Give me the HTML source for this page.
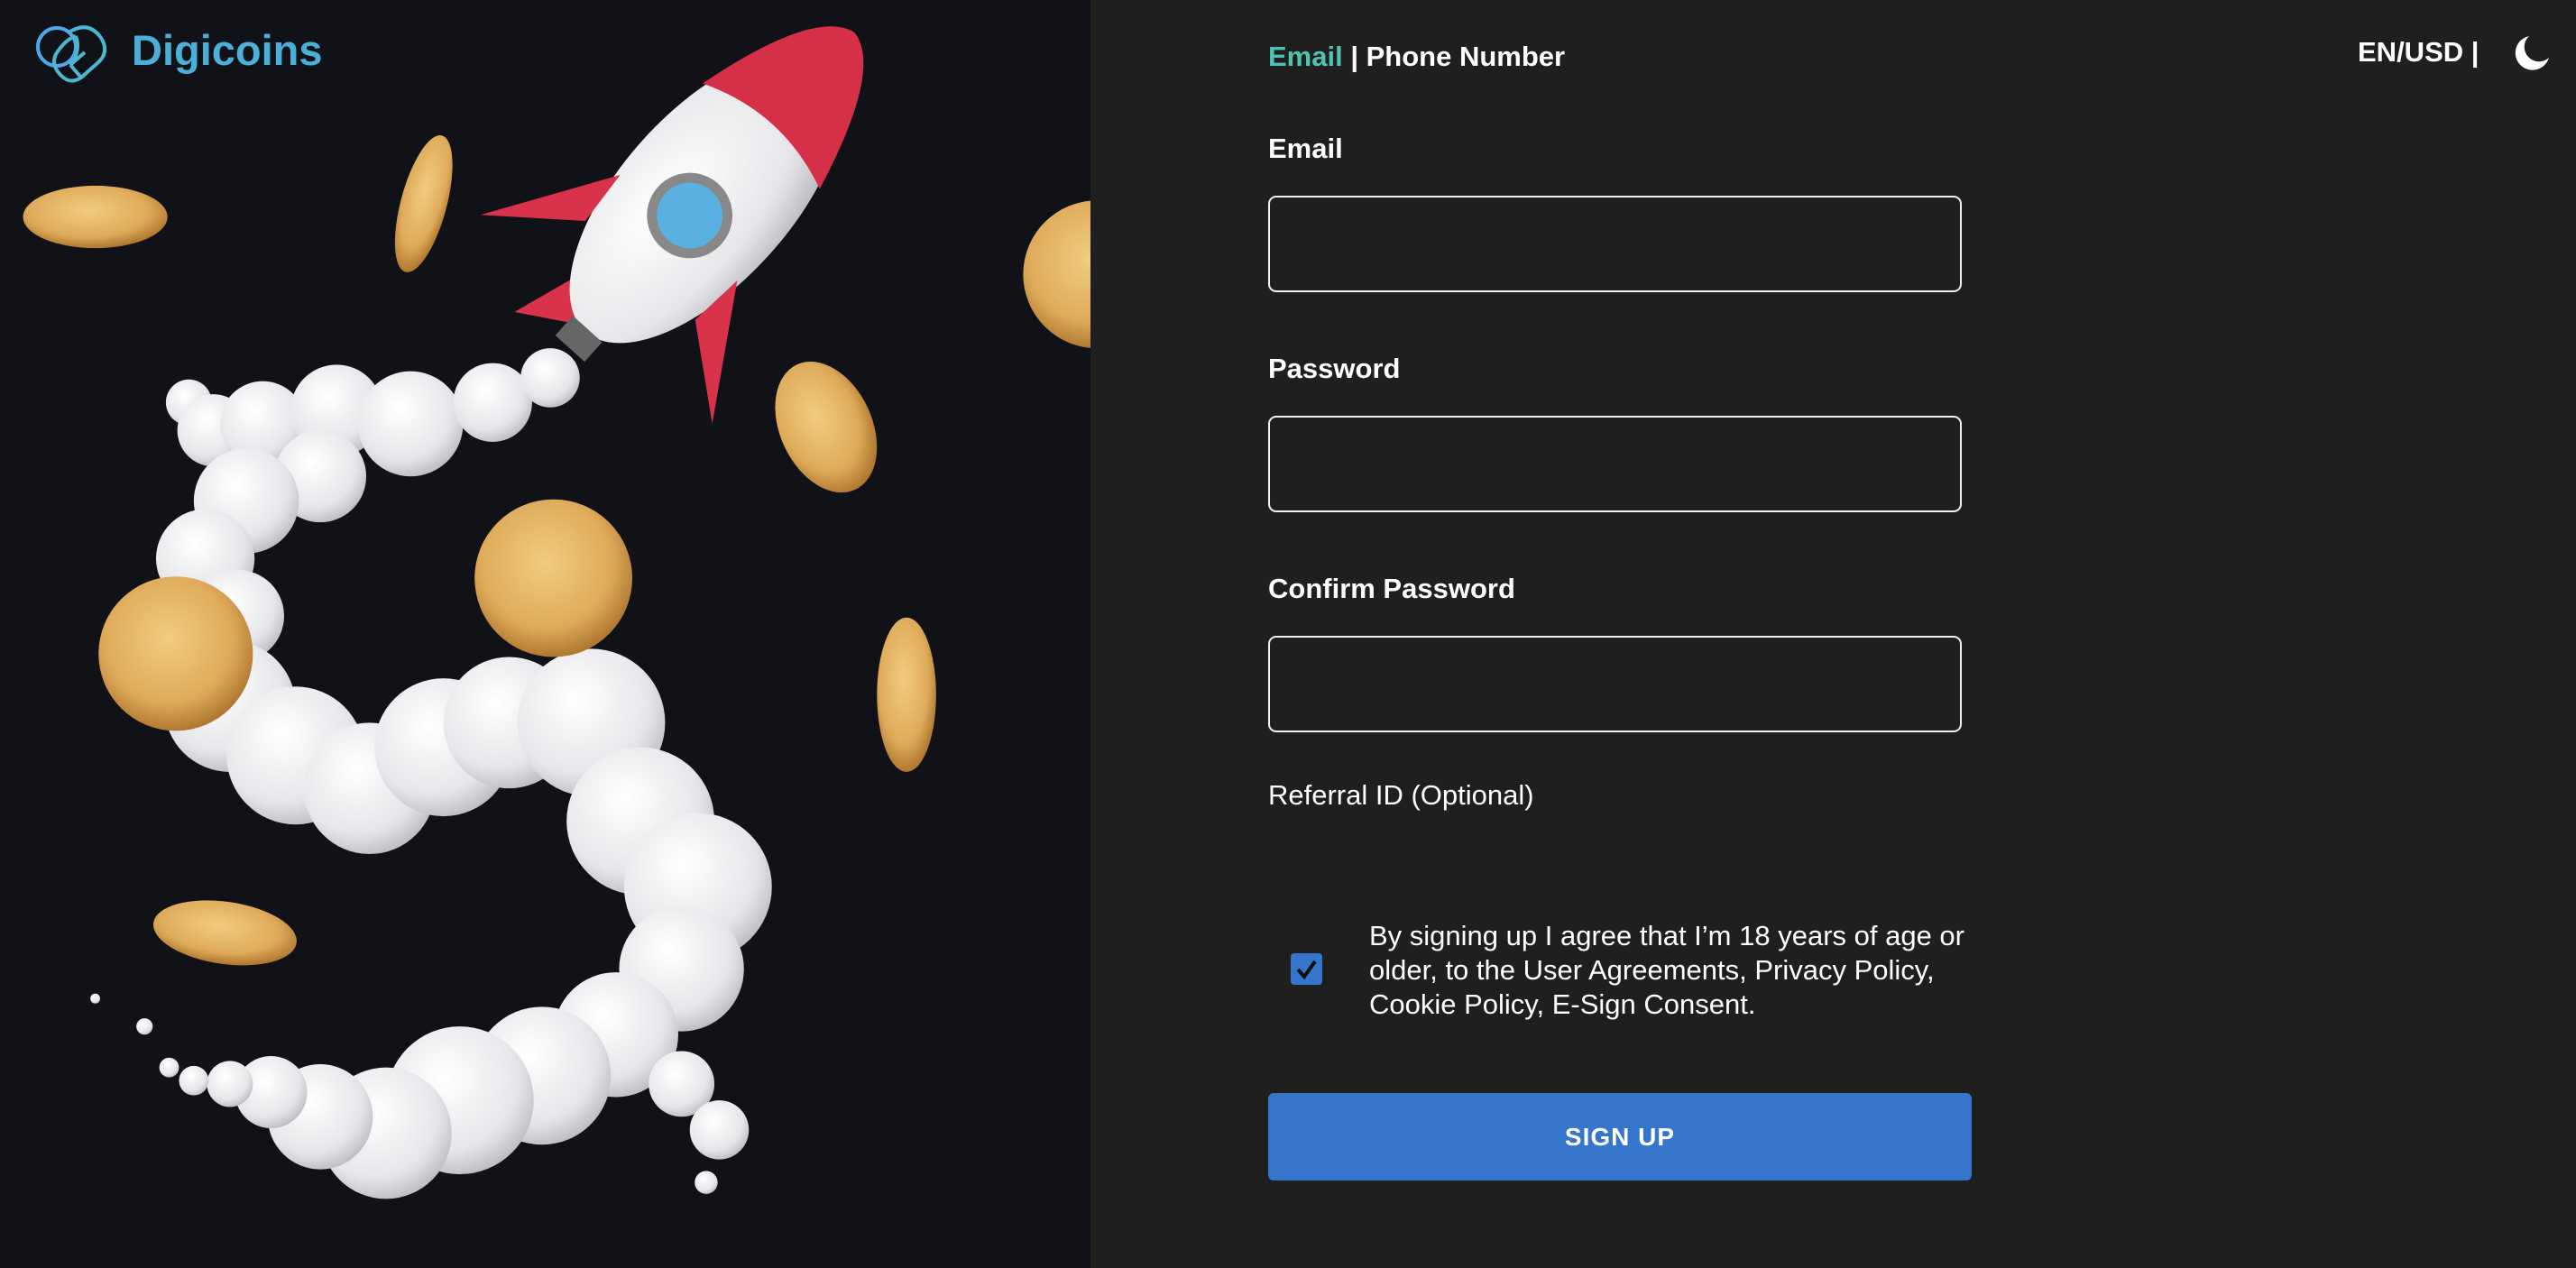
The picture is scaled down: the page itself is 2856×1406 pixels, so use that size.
<!DOCTYPE html>
<html><head><meta charset="utf-8"><style>
*{margin:0;padding:0;box-sizing:border-box}
body{width:2856px;height:1406px;background:#1f1f1f;font-family:"Liberation Sans",sans-serif;color:#fff;position:relative;overflow:hidden}
.left{position:absolute;left:0;top:0;width:1209px;height:1406px;background:#101217;overflow:hidden}
.abs{position:absolute;white-space:nowrap}
.lbl{font-weight:bold;font-size:31px}
.inp{position:absolute;left:1406px;width:769px;height:107px;border:2px solid #f0f0f0;border-radius:9px}
</style></head><body>
<div class="left">
<svg width="1209" height="1406" viewBox="0 0 664 772" style="position:absolute;left:0;top:0">
<defs>
<radialGradient id="g" cx="45%" cy="40%" r="60%"><stop offset="0" stop-color="#f2cc80"/><stop offset="0.7" stop-color="#deaa5a"/><stop offset="1" stop-color="#b07830"/></radialGradient>
<radialGradient id="c" cx="40%" cy="35%" r="70%"><stop offset="0" stop-color="#ffffff"/><stop offset="0.7" stop-color="#e6e6ea"/><stop offset="1" stop-color="#b8b8c0"/></radialGradient>
</defs>
<g fill="url(#c)">
<circle cx="115" cy="245" r="14"/><circle cx="130" cy="262" r="22"/><circle cx="160" cy="258" r="26"/><circle cx="205" cy="250" r="28"/><circle cx="250" cy="258" r="32"/><circle cx="300" cy="245" r="24"/><circle cx="335" cy="230" r="18"/>
<circle cx="195" cy="290" r="28"/><circle cx="150" cy="305" r="32"/><circle cx="125" cy="340" r="30"/><circle cx="145" cy="375" r="28"/><circle cx="140" cy="430" r="40"/><circle cx="180" cy="460" r="42"/><circle cx="225" cy="480" r="40"/><circle cx="270" cy="455" r="42"/><circle cx="310" cy="440" r="40"/><circle cx="360" cy="440" r="45"/><circle cx="390" cy="500" r="45"/><circle cx="425" cy="540" r="45"/><circle cx="415" cy="590" r="38"/><circle cx="375" cy="630" r="38"/><circle cx="330" cy="655" r="42"/><circle cx="280" cy="670" r="45"/><circle cx="235" cy="690" r="40"/><circle cx="195" cy="680" r="32"/><circle cx="165" cy="665" r="22"/><circle cx="140" cy="660" r="14"/><circle cx="118" cy="658" r="9"/><circle cx="103" cy="650" r="6"/><circle cx="415" cy="660" r="20"/><circle cx="438" cy="688" r="18"/><circle cx="430" cy="720" r="7"/><circle cx="88" cy="625" r="5"/><circle cx="58" cy="608" r="3"/>
</g>
<g transform="translate(10 0) rotate(-48 420 120)">
<path d="M345 98 L290 80 L320 130Z" fill="#d8334a"/>
<ellipse cx="420" cy="120" rx="110" ry="52" fill="url(#c)"/>
<path d="M470 72 Q550 92 555 120 Q550 148 470 168 Q490 120 470 72Z" fill="#d63048"/>
<circle cx="405" cy="120" r="26" fill="#888"/><circle cx="405" cy="120" r="20" fill="#5ab0e0"/>
<path d="M360 165 L320 215 L395 168Z" fill="#d8334a"/>
<path d="M360 75 L320 25 L395 72Z" fill="#d8334a"/>
<rect x="296" y="108" width="16" height="24" fill="#666"/>
</g>
<g fill="url(#g)">
<ellipse cx="58" cy="132" rx="44" ry="19"/>
<ellipse cx="258" cy="124" rx="14" ry="43" transform="rotate(15 258 124)"/>
<circle cx="337" cy="352" r="48"/>
<circle cx="107" cy="398" r="47"/>
<ellipse cx="503" cy="260" rx="28" ry="42" transform="rotate(-25 503 260)"/>
<ellipse cx="552" cy="423" rx="18" ry="47"/>
<ellipse cx="137" cy="568" rx="44" ry="19" transform="rotate(8 137 568)"/>
<circle cx="668" cy="167" r="45"/>
</g>
</svg>
<svg class="abs" style="left:38px;top:26px" width="86" height="68" viewBox="0 0 86 68" fill="none" stroke-width="4">
<defs><linearGradient id="lg" x1="0" x2="1"><stop offset="0" stop-color="#4aa8e8"/><stop offset="1" stop-color="#58a6f0"/></linearGradient></defs>
<circle cx="25" cy="26" r="21" stroke="url(#lg)"/>
<path d="M38 10 Q60 -4 74 16 Q84 32 70 44 L52 60 Q40 68 30 58 Q18 46 24 34 Q34 18 46 14" stroke="#4ab8d0"/>
<path d="M52 60 L40 46 M46 14 Q52 30 40 46 L56 32" stroke="#4ab8d0"/>
</svg>
<div class="abs" style="left:146px;top:28px;font-size:47px;font-weight:bold;color:#4ab0d8">Digicoins</div>
</div>
<div class="abs" style="left:1406px;top:45px;font-size:31px;font-weight:bold"><span style="color:#4ec3b3">Email</span> | Phone Number</div>
<div class="abs" style="left:2614px;top:40px;font-size:31px;font-weight:bold">EN/USD |</div>
<svg class="abs" style="left:2786px;top:38px" width="42" height="42" viewBox="0 0 42 42"><path d="M18 2 A19 19 0 1 0 40 26 A15 15 0 0 1 18 2Z" fill="#fff"/></svg>
<div class="abs lbl" style="left:1406px;top:147px">Email</div>
<div class="inp" style="top:217px"></div>
<div class="abs lbl" style="left:1406px;top:391px">Password</div>
<div class="inp" style="top:461px"></div>
<div class="abs lbl" style="left:1406px;top:635px">Confirm Password</div>
<div class="inp" style="top:705px"></div>
<div class="abs" style="left:1406px;top:864px;font-size:31px">Referral ID (Optional)</div>
<div class="abs" style="left:1431px;top:1057px;width:35px;height:35px;background:#3575cc;border-radius:4px"><svg width="35" height="35" viewBox="0 0 35 35"><path d="M8 18 L15 26 L27 9" stroke="#111" stroke-width="4" fill="none"/></svg></div>
<div class="abs" style="left:1518px;top:1019px;font-size:31px;line-height:38px;white-space:normal;width:720px">By signing up I agree that I’m 18 years of age or older, to the User Agreements, Privacy Policy, Cookie Policy, E-Sign Consent.</div>
<div class="abs" style="left:1406px;top:1212px;width:780px;height:97px;background:#3575cc;border-radius:6px;font-weight:bold;font-size:28px;display:flex;align-items:center;justify-content:center;letter-spacing:1px">SIGN UP</div>
</body></html>
